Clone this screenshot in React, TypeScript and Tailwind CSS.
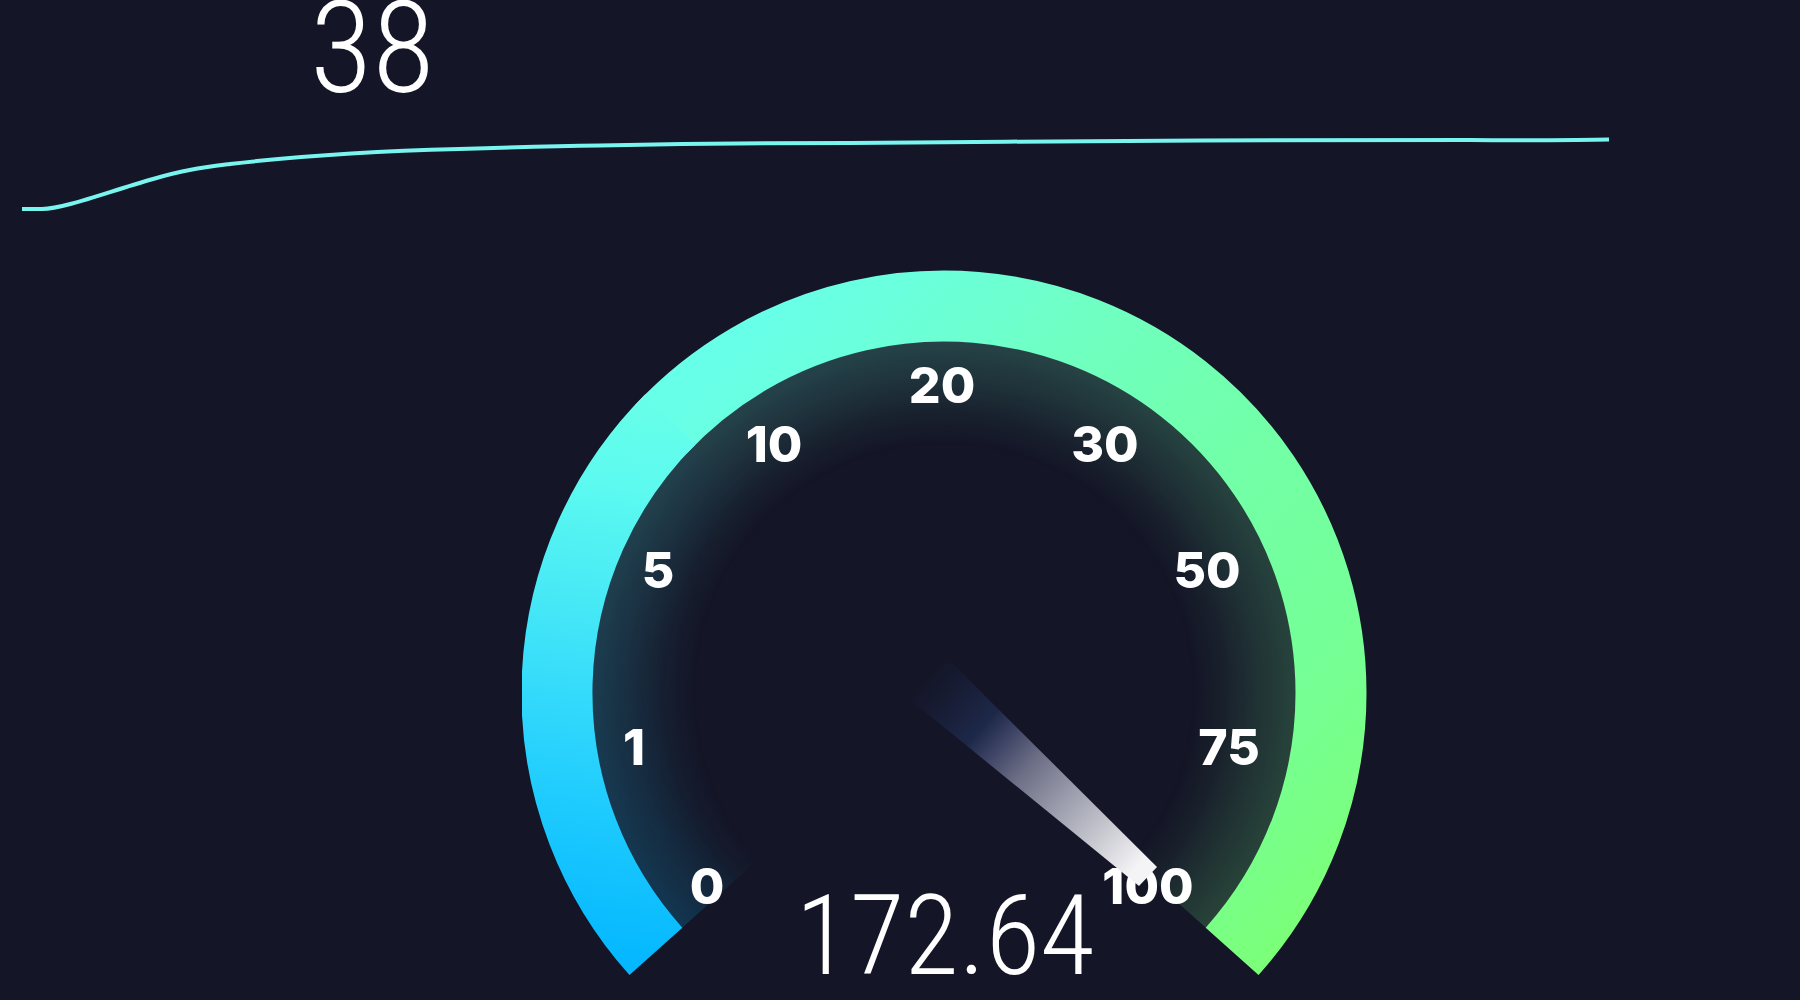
const TICKS = [
  { label: "0", x: -237, y: 211 },
  { label: "1", x: -310, y: 72 },
  { label: "5", x: -286, y: -105 },
  { label: "10", x: -170, y: -231 },
  { label: "20", x: -2, y: -290 },
  { label: "30", x: 161, y: -231 },
  { label: "50", x: 263, y: -105 },
  { label: "75", x: 285, y: 72 },
  { label: "100", x: 204, y: 211 },
];

function PingChart() {
  return (
    <svg viewBox="0 112 1800 112" className="block w-full" role="img" aria-label="Speed over time">
      <path
        d="M22 209H42C64 209 110 191 153 179C184 170 200 168 230 164C290 157 380 151 459 149C520 147 560 146 600 145.500C700 143.500 760 143 850 143C980 142 1060 141 1200 140.500C1300 140 1400 139.500 1470 140C1530 141 1560 140 1609 139.500"
        fill="none"
        stroke="#79f5f0"
        strokeWidth="4"
      />
    </svg>
  );
}

function Dial() {
  return (
    <svg
      viewBox="-422 -425 846 732"
      className="col-start-1 row-start-1 block w-full"
      role="img"
      aria-label="Speed gauge"
    >
      <defs>
        <linearGradient id="cool" gradientUnits="userSpaceOnUse" x1="-344" y1="267" x2="-254" y2="-293">
          <stop offset="0" stopColor="#04b7ff" />
          <stop offset="0.26" stopColor="#1ecbfe" />
          <stop offset="0.45" stopColor="#34dafb" />
          <stop offset="0.61" stopColor="#46e8f6" />
          <stop offset="0.83" stopColor="#5cfaf0" />
          <stop offset="1" stopColor="#68ffe8" />
        </linearGradient>
        <linearGradient id="warm" gradientUnits="userSpaceOnUse" x1="-254" y1="-293" x2="346" y2="267">
          <stop offset="0" stopColor="#68ffe8" />
          <stop offset="0.15" stopColor="#6cffd6" />
          <stop offset="0.32" stopColor="#70ffbe" />
          <stop offset="0.54" stopColor="#72ffa8" />
          <stop offset="0.77" stopColor="#75ff97" />
          <stop offset="0.9" stopColor="#79ff86" />
          <stop offset="1" stopColor="#7cff76" />
        </linearGradient>
        <radialGradient id="falloff" gradientUnits="userSpaceOnUse" cx="0" cy="0" r="352">
          <stop offset="0.7" stopColor="#fff" stopOpacity="0" />
          <stop offset="0.78" stopColor="#fff" stopOpacity="0.04" />
          <stop offset="0.88" stopColor="#fff" stopOpacity="0.12" />
          <stop offset="1" stopColor="#fff" stopOpacity="0.2" />
        </radialGradient>
        <mask id="glow" maskUnits="userSpaceOnUse" x="-422" y="-425" width="846" height="732">
          <circle r="352" fill="url(#falloff)" />
        </mask>
        <linearGradient id="needle" gradientUnits="userSpaceOnUse" x1="-20" y1="-18" x2="204" y2="184">
          <stop offset="0" stopColor="#1b2444" stopOpacity="0" />
          <stop offset="0.26" stopColor="#1d2849" />
          <stop offset="0.34" stopColor="#3c4263" />
          <stop offset="0.46" stopColor="#6b6e85" />
          <stop offset="0.64" stopColor="#a0a1b0" />
          <stop offset="0.79" stopColor="#c8c8d0" />
          <stop offset="0.95" stopColor="#f4f4f6" />
        </linearGradient>
      </defs>

      {/* the warm arc starts a little early, under the cool one, so no seam shows */}
      <g mask="url(#glow)" fill="none" strokeWidth="120">
        <path d="M-219.4 -204.6A300 300 0 0 1 300 0A300 300 0 0 1 223.3 200.3" stroke="url(#warm)" />
        <path d="M-223.3 200.3A300 300 0 0 1 -212.1 -212.1" stroke="url(#cool)" />
      </g>

      <g fill="none" strokeWidth="71">
        <path d="M-283 -263.9A387 387 0 0 1 387 0A387 387 0 0 1 288.1 258.4" stroke="url(#warm)" />
        <path d="M-288.1 258.4A387 387 0 0 1 -273.7 -273.7" stroke="url(#cool)" />
      </g>

      <g className="fill-white font-['Inter',sans-serif] text-[50px] font-extrabold" textAnchor="middle">
        {TICKS.map((tick) => (
          <text key={tick.label} x={tick.x} y={tick.y}>
            {tick.label}
          </text>
        ))}
      </g>

      <path d="M-42 0L-2 -40L213 174L195 193Z" fill="url(#needle)" />
    </svg>
  );
}

export default function App() {
  return (
    <main className="min-h-screen overflow-hidden bg-[#141526] font-['Roboto_Condensed','Roboto',sans-serif] text-white">
      <header>
        <p className="-mt-4 ml-[17%] pl-1 text-[128px] leading-none font-light">38</p>
        <PingChart />
      </header>

      <section className="mt-11 ml-[29%] grid w-[47%]">
        <Dial />
        <output className="col-start-1 row-start-1 self-end pb-2 text-center text-[112px] leading-none font-light">
          172.64
        </output>
      </section>
    </main>
  );
}
